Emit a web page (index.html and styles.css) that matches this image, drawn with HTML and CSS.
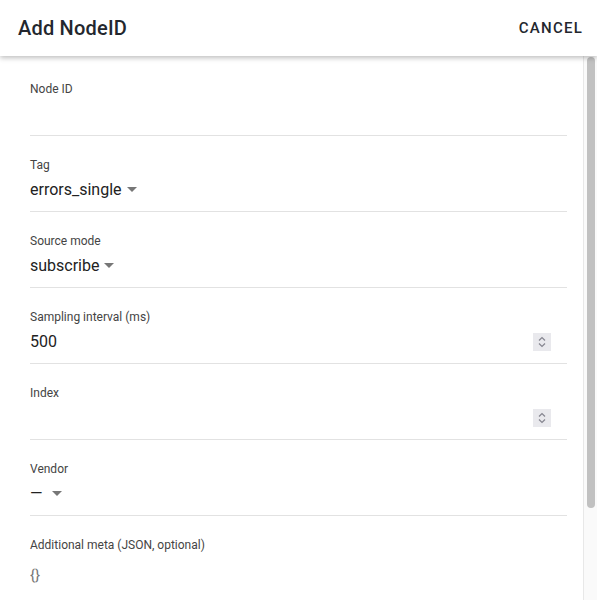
FILE: index.html
```html
<html lang="en">
<head>
  <meta charset="UTF-8" />
  <meta name="viewport" content="width=device-width, initial-scale=1.0" />
  <title>Add NodeID</title>
  <link rel="stylesheet" href="styles.css">
</head>
<body>
  <div class="dialog">
    <header class="dialog-head">
      <h1>Add NodeID</h1>
      <button class="btn-cancel" type="button">CANCEL</button>
    </header>

    <div class="dialog-main">
      <form class="dialog-body">
        <div class="field">
          <label for="node-id">Node ID</label>
          <input type="text" id="node-id" name="nodeId">
        </div>

        <div class="field">
          <label>Tag</label>
          <div class="select">errors_single <span class="caret"></span></div>
        </div>

        <div class="field">
          <label>Source mode</label>
          <div class="select">subscribe <span class="caret"></span></div>
        </div>

        <div class="field">
          <label for="interval">Sampling interval (ms)</label>
          <div class="number">
            <input type="text" id="interval" name="interval" value="500">
            <span class="spin">
              <svg width="18" height="18" viewBox="0 0 18 18"><path d="M6 7.5l3-3 3 3M6 10.5l3 3 3-3" fill="none" stroke="#85858f" stroke-width="1.2"/></svg>
            </span>
          </div>
        </div>

        <div class="field">
          <label for="index">Index</label>
          <div class="number">
            <input type="text" id="index" name="index">
            <span class="spin">
              <svg width="18" height="18" viewBox="0 0 18 18"><path d="M6 7.5l3-3 3 3M6 10.5l3 3 3-3" fill="none" stroke="#85858f" stroke-width="1.2"/></svg>
            </span>
          </div>
        </div>

        <div class="field">
          <label>Vendor</label>
          <div class="select select-empty">&mdash; <span class="caret"></span></div>
        </div>

        <div class="field field-meta">
          <label for="meta">Additional meta (JSON, optional)</label>
          <textarea id="meta" name="meta" placeholder="{}"></textarea>
        </div>
      </form>

      <div class="scrollbar"><div class="thumb"></div></div>
    </div>
  </div>
</body>
</html>
```

FILE: styles.css
```css
body {
  margin: 0;
  font-family: Roboto, "Liberation Sans", sans-serif;
  background: #fff;
}
.dialog {
  display: flex;
  flex-direction: column;
  height: 600px;
  overflow: hidden;
}
.dialog-head {
  display: flex;
  align-items: center;
  justify-content: space-between;
  height: 56px;
  padding: 0 14px 0 18px;
  box-sizing: border-box;
  background: #fff;
  box-shadow: 0 2px 5px rgba(0, 0, 0, 0.25);
  position: relative;
  z-index: 2;
  flex-shrink: 0;
}
h1 {
  margin: 0;
  font-size: 20px;
  font-weight: 500;
  letter-spacing: 0.2px;
  color: #23272e;
}
.btn-cancel {
  border: none;
  background: none;
  font-family: inherit;
  font-size: 15px;
  font-weight: 500;
  letter-spacing: 1.25px;
  color: #23272e;
  padding: 0;
  cursor: pointer;
}
.dialog-main {
  flex: 1;
  display: flex;
  min-height: 0;
}
.dialog-body {
  flex: 1;
  overflow: hidden;
  margin: 0;
  padding: 4px 16px 0 30px;
}
.scrollbar {
  width: 14px;
  box-sizing: border-box;
  background: #fafafa;
  border-left: 1px solid #e8e8e8;
  padding: 1px 2px 0 3px;
  flex-shrink: 0;
}
.thumb {
  height: 451px;
  background: #c1c1c1;
  border-radius: 4px;
}
.field {
  display: flex;
  flex-direction: column;
  padding: 21px 0 9px;
  border-bottom: 1px solid #e2e2e2;
}
.field label {
  font-size: 12px;
  line-height: 16px;
  color: #444;
  margin-bottom: 5px;
}
.field input, .select {
  height: 24px;
  font-family: inherit;
  font-size: 16px;
  line-height: 24px;
  color: #222;
  border: none;
  padding: 0;
  outline: none;
  background: none;
}
.select {
  display: flex;
  align-items: center;
  gap: 5px;
}
.select-empty {
  gap: 9px;
}
.caret {
  width: 0;
  height: 0;
  border-left: 5px solid transparent;
  border-right: 5px solid transparent;
  border-top: 5px solid #777;
  margin-top: -1px;
}
.number {
  display: flex;
  align-items: center;
  padding-right: 16px;
}
.number input {
  flex: 1;
}
.spin {
  width: 18px;
  height: 18px;
  background: #e9e9ed;
  display: flex;
}
.field-meta {
  border-bottom: none;
  padding-bottom: 20px;
}
.field-meta label {
  margin-bottom: 10px;
}
textarea {
  height: 130px;
  border: none;
  padding: 0;
  resize: none;
  outline: none;
  font-family: inherit;
  font-size: 15px;
  line-height: 24px;
}
textarea::placeholder {
  color: #777;
}
```
